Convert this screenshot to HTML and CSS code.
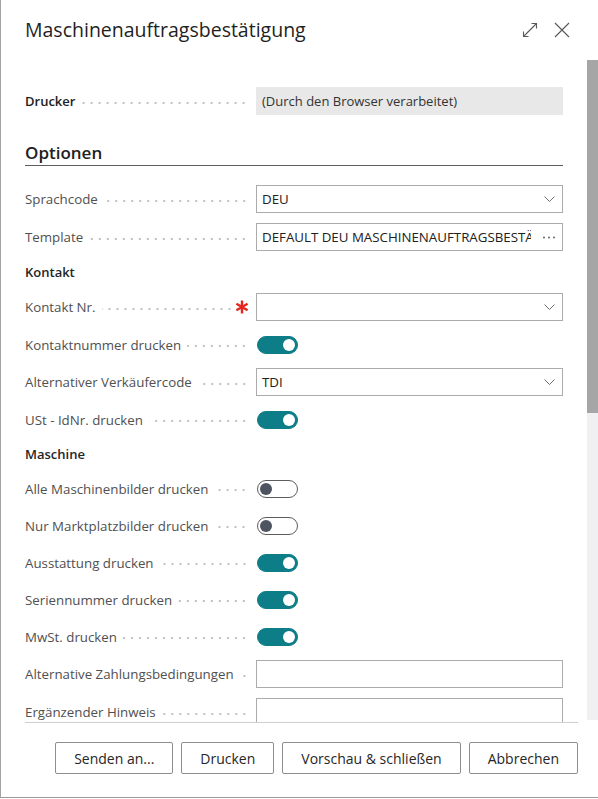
FILE: index.html
```html
<!DOCTYPE html>
<html lang="de">
<head>
<meta charset="utf-8">
<title>Maschinenauftragsbestätigung</title>
<link rel="stylesheet" href="styles.css">
</head>
<body>
<div class="dialog">
  <header class="dlg-header">
    <h1 class="title">Maschinenauftragsbestätigung</h1>
    <div class="hdr-icons">
      <button class="icon-btn" aria-label="Maximieren">
        <svg width="16" height="16" viewBox="0 0 16 16" fill="none" stroke="#5a5a5a" stroke-width="1.1"><path d="M1.5 14.5 L14.5 1.5 M9.5 1.5 H14.5 V6.5 M1.5 9.5 V14.5 H6.5"/></svg>
      </button>
      <button class="icon-btn" aria-label="Schließen">
        <svg width="16" height="16" viewBox="0 0 16 16" fill="none" stroke="#5a5a5a" stroke-width="1.2"><path d="M1 1 L15 15 M15 1 L1 15"/></svg>
      </button>
    </div>
  </header>

  <div class="dlg-body">
    <div class="content">
      <div class="row row-field">
        <div class="label strong"><span>Drucker</span><i class="leader"></i></div>
        <div class="field readonly">(Durch den Browser verarbeitet)</div>
      </div>

      <h2 class="section">Optionen</h2>

      <div class="rows">
        <div class="row row-field">
          <div class="label"><span>Sprachcode</span><i class="leader"></i></div>
          <div class="field"><span class="value">DEU</span><svg class="chev" width="11" height="6" viewBox="0 0 11 6" fill="none" stroke="#6e6e6e" stroke-width="1"><path d="M0.5 0.5 L5.5 5.5 L10.5 0.5"/></svg></div>
        </div>
        <div class="row row-field">
          <div class="label"><span>Template</span><i class="leader"></i></div>
          <div class="field"><span class="value clip">DEFAULT DEU MASCHINENAUFTRAGSBESTÄTIGUNG</span><svg class="more" width="12" height="3" viewBox="0 0 12 3" fill="#555"><circle cx="1" cy="1.5" r="0.9"/><circle cx="6" cy="1.5" r="0.9"/><circle cx="11" cy="1.5" r="0.9"/></svg></div>
        </div>

        <div class="group">Kontakt</div>

        <div class="row row-field">
          <div class="label"><span>Kontakt Nr.</span><i class="leader"></i>
            <svg class="req" width="14" height="14" viewBox="0 0 14 14" stroke="#e3261e" stroke-width="2.4" stroke-linecap="butt"><path d="M7 0.5 V13.5 M1.4 3.75 L12.6 10.25 M1.4 10.25 L12.6 3.75"/></svg>
          </div>
          <div class="field"><span class="value"></span><svg class="chev" width="11" height="6" viewBox="0 0 11 6" fill="none" stroke="#6e6e6e" stroke-width="1"><path d="M0.5 0.5 L5.5 5.5 L10.5 0.5"/></svg></div>
        </div>
        <div class="row row-toggle">
          <div class="label"><span>Kontaktnummer drucken</span><i class="leader"></i></div>
          <div class="cell"><span class="toggle on"></span></div>
        </div>
        <div class="row row-field">
          <div class="label"><span>Alternativer Verkäufercode</span><i class="leader"></i></div>
          <div class="field"><span class="value">TDI</span><svg class="chev" width="11" height="6" viewBox="0 0 11 6" fill="none" stroke="#6e6e6e" stroke-width="1"><path d="M0.5 0.5 L5.5 5.5 L10.5 0.5"/></svg></div>
        </div>
        <div class="row row-toggle">
          <div class="label"><span>USt - IdNr. drucken</span><i class="leader"></i></div>
          <div class="cell"><span class="toggle on"></span></div>
        </div>

        <div class="group">Maschine</div>

        <div class="row row-toggle">
          <div class="label"><span>Alle Maschinenbilder drucken</span><i class="leader"></i></div>
          <div class="cell"><span class="toggle"></span></div>
        </div>
        <div class="row row-toggle">
          <div class="label"><span>Nur Marktplatzbilder drucken</span><i class="leader"></i></div>
          <div class="cell"><span class="toggle"></span></div>
        </div>
        <div class="row row-toggle">
          <div class="label"><span>Ausstattung drucken</span><i class="leader"></i></div>
          <div class="cell"><span class="toggle on"></span></div>
        </div>
        <div class="row row-toggle">
          <div class="label"><span>Seriennummer drucken</span><i class="leader"></i></div>
          <div class="cell"><span class="toggle on"></span></div>
        </div>
        <div class="row row-toggle">
          <div class="label"><span>MwSt. drucken</span><i class="leader"></i></div>
          <div class="cell"><span class="toggle on"></span></div>
        </div>
        <div class="row row-field">
          <div class="label"><span>Alternative Zahlungsbedingungen</span><i class="leader"></i></div>
          <div class="field"></div>
        </div>
        <div class="row row-field">
          <div class="label"><span>Ergänzender Hinweis</span><i class="leader"></i></div>
          <div class="field"></div>
        </div>
      </div>
    </div>
    <div class="scrollbar"><div class="thumb"></div></div>
  </div>

  <footer class="dlg-footer">
    <button class="btn">Senden an...</button>
    <button class="btn">Drucken</button>
    <button class="btn">Vorschau &amp; schließen</button>
    <button class="btn">Abbrechen</button>
  </footer>
</div>
</body>
</html>
```

FILE: styles.css
```css
* { box-sizing: border-box; }
html, body { margin: 0; padding: 0; background: #ffffff; }
body {
  font-family: "Open Sans", "Noto Sans", "Liberation Sans", sans-serif;
  color: #212121;
}
.dialog {
  width: 598px;
  height: 798px;
  border-left: 1px solid #a3a3a3;
  border-bottom: 1px solid #9a9a9a;
  display: flex;
  flex-direction: column;
  background: #fff;
  overflow: hidden;
}
.dlg-header {
  height: 60px;
  flex: none;
  display: flex;
  align-items: center;
  justify-content: space-between;
  padding: 0 28px 0 24px;
}
.title {
  margin: 0;
  font-size: 19.5px;
  font-weight: 400;
  line-height: 28px;
  color: #1f1f1f;
}
.hdr-icons { display: flex; gap: 16px; align-items: center; }
.icon-btn {
  border: 0; background: none; padding: 0; margin: 0;
  width: 16px; height: 16px; display: block;
}
.icon-btn svg { display: block; }

.dlg-body {
  height: 662px;
  flex: none;
  display: flex;
}
.content {
  flex: 1;
  overflow: hidden;
  padding: 27px 24px 0 24px;
}
.scrollbar {
  width: 11px;
  flex: none;
  height: 660px;
  background: #f0eff1;
}
.thumb { height: 353px; background: #a6a6a6; }

.row {
  display: grid;
  grid-template-columns: 223px 307px;
  column-gap: 8px;
  align-items: center;
}
.row-field { height: 28px; }
.row-toggle { height: 27px; }
.rows { display: flex; flex-direction: column; gap: 10px; margin-top: 19px; }

.label {
  display: flex;
  align-items: center;
  font-size: 13.3px;
  color: #505050;
  white-space: nowrap;
  min-width: 0;
}
.label.strong { font-weight: 600; color: #212121; font-size: 13px; }
.leader {
  flex: 1;
  height: 2px;
  margin: 3px 0 0 6px;
  background-image: radial-gradient(circle, #c2c2c2 0.8px, transparent 1.1px);
  background-size: 8px 2px;
  background-position: right center;
  background-repeat: repeat-x;
}
.req { flex: none; margin: 0 -1px 0 2px; }

.field {
  height: 28px;
  border: 1px solid #ababab;
  display: flex;
  align-items: center;
  padding: 0 6px 0 5px;
  font-size: 13.3px;
  color: #212121;
  background: #fff;
}
.field.readonly {
  border-color: #e8e8e8;
  background: #e8e8e8;
  color: #333;
  font-size: 13px;
}
.value { flex: 1; white-space: nowrap; }
.value.clip { overflow: hidden; }
.chev { flex: none; margin-right: 1px; }
.more { flex: none; margin: 0 1px 0 12px; }

.section {
  margin: 26px 0 0 0;
  font-size: 17px;
  font-weight: 600;
  line-height: 24px;
  color: #212121;
  border-bottom: 1px solid #5e5e5e;
}
.group {
  height: 22px;
  line-height: 22px;
  font-size: 13px;
  font-weight: 600;
  color: #262626;
}

.cell { display: flex; align-items: center; padding-left: 1px; }
.toggle {
  position: relative;
  width: 41px;
  height: 18px;
  border-radius: 9px;
  border: 1px solid #5c5c5c;
  background: #fff;
  display: block;
}
.toggle::after {
  content: "";
  position: absolute;
  top: 2px;
  left: 2px;
  width: 12px;
  height: 12px;
  border-radius: 50%;
  background: #4f5461;
}
.toggle.on { background: #0d7d88; border-color: #0d7d88; }
.toggle.on::after { left: auto; right: 2px; background: #fff; }

.dlg-footer {
  flex: none;
  height: 76px;
  margin: 0 20px 0 24px;
  border-top: 1px solid #cfcfcf;
  display: flex;
  justify-content: flex-end;
  align-items: flex-start;
  gap: 8px;
  padding-top: 19px;
}
.btn {
  height: 32px;
  padding: 0 18px;
  border: 1px solid #8e8e8e;
  border-radius: 2px;
  background: #fff;
  font-family: inherit;
  font-size: 14px;
  color: #262626;
}
```
